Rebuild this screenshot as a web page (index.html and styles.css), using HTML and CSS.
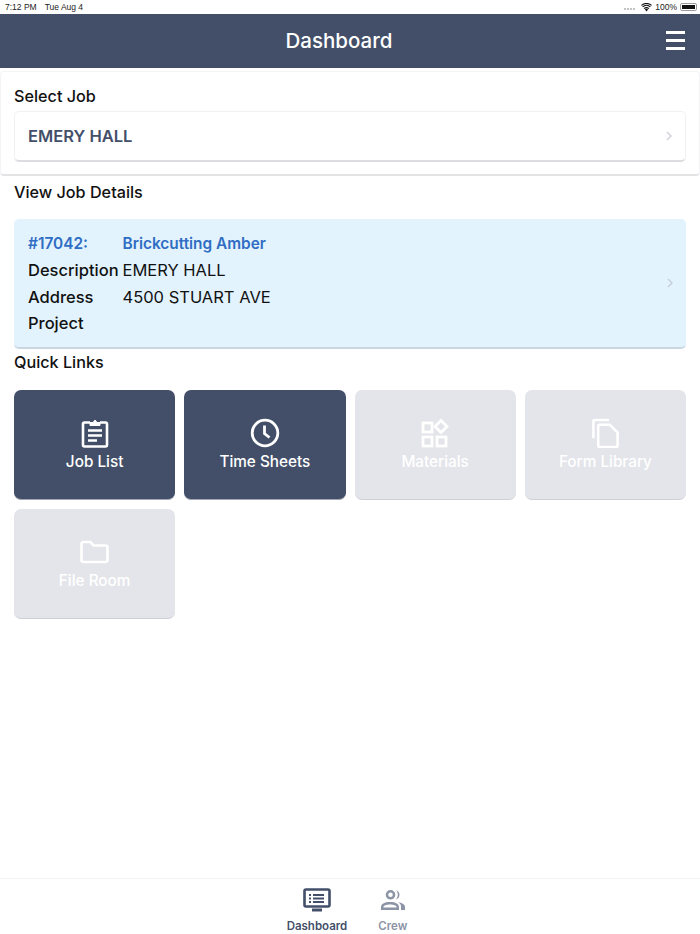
FILE: index.html
```html
<!DOCTYPE html>
<html lang="en">
<head>
    <meta charset="UTF-8">
    <meta name="viewport" content="width=device-width, initial-scale=1.0">
    <title>Dashboard</title>
    <link rel="stylesheet" href="styles.css">
</head>
<body>
    <div class="app">
        <!-- Status bar -->
        <div class="status-bar">
            <div class="status-left"><span>7:12 PM</span><span>Tue Aug 4</span></div>
            <div class="status-right">
                <span class="signal"><i></i><i></i><i></i><i></i></span>
                <svg class="wifi" width="11" height="9" viewBox="0 0 13 10">
                    <path d="M6.500 9.600 4.600 7.400a2.900 2.900 0 0 1 3.800 0z" fill="#111"/>
                    <path d="M3.600 6.300a4.500 4.500 0 0 1 5.800 0" fill="none" stroke="#111" stroke-width="1.400"/>
                    <path d="M1.900 4.300a7 7 0 0 1 9.200 0" fill="none" stroke="#111" stroke-width="1.400"/>
                    <path d="M.5 2.400a9.200 9.200 0 0 1 12 0" fill="none" stroke="#111" stroke-width="1.300"/>
                </svg>
                <span>100%</span>
                <span class="battery"><span class="battery-fill"></span></span>
            </div>
        </div>

        <!-- Nav bar -->
        <header class="nav-bar">
            <h1>Dashboard</h1>
            <div class="menu"><i></i><i></i><i></i></div>
        </header>

        <main class="content">
            <section class="select-card">
                <h2>Select Job</h2>
                <div class="job-select">
                    <span>EMERY HALL</span>
                    <svg class="chevron" width="6" height="10" viewBox="0 0 6 10"><path d="M1 1l4 4-4 4" fill="none" stroke="#cfd1d8" stroke-width="1.400"/></svg>
                </div>
            </section>

            <div class="inner">
                <h2 class="details-title">View Job Details</h2>
                <div class="job-details">
                    <div class="details-grid">
                        <div class="job-no">#17042:</div>
                        <div class="job-name">Brickcutting Amber</div>
                        <div class="key">Description</div>
                        <div>EMERY HALL</div>
                        <div class="key">Address</div>
                        <div>4500 STUART AVE</div>
                        <div class="key">Project</div>
                        <div></div>
                    </div>
                    <svg class="chevron" width="6" height="10" viewBox="0 0 6 10"><path d="M1 1l4 4-4 4" fill="none" stroke="#c5ced8" stroke-width="1.400"/></svg>
                </div>

                <h2 class="links-title">Quick Links</h2>
                <div class="tiles">
                    <a class="tile active">
                        <svg width="28" height="30" viewBox="0 0 28 30" fill="none" stroke="#fff" stroke-width="2.600">
                            <path d="M9 4.500H3.500a1.500 1.500 0 0 0-1.500 1.500v21a1.500 1.500 0 0 0 1.500 1.500h21a1.500 1.500 0 0 0 1.500-1.500V6a1.500 1.500 0 0 0-1.500-1.500H19"/>
                            <path d="M9 4.500h3l2-2.500 2 2.500h3v3H9z" fill="#fff" stroke-width="1"/>
                            <path d="M7 12.500h14M7 17.500h14M7 22.500h9"/>
                        </svg>
                        <span>Job List</span>
                    </a>
                    <a class="tile active">
                        <svg width="30" height="30" viewBox="0 0 30 30" fill="none" stroke="#fff" stroke-width="2.800">
                            <circle cx="15" cy="15" r="12.800"/>
                            <path d="M14.500 7.500v8l5 4"/>
                        </svg>
                        <span>Time Sheets</span>
                    </a>
                    <a class="tile">
                        <svg width="28" height="28" viewBox="0 0 28 28" fill="none" stroke="#fff" stroke-width="2.800">
                            <rect x="2" y="4" width="9" height="9"/>
                            <path d="M20 1.500l6 6-6 6-6-6z"/>
                            <rect x="2" y="18" width="9" height="9"/>
                            <rect x="16" y="18" width="9" height="9"/>
                        </svg>
                        <span>Materials</span>
                    </a>
                    <a class="tile">
                        <svg width="28" height="31" viewBox="0 0 28 31" fill="none" stroke="#fff" stroke-width="2.600">
                            <path d="M2 21V3.500A1.500 1.500 0 0 1 3.500 2H18"/>
                            <path d="M7 8.500A1.500 1.500 0 0 1 8.500 7H19l8 8v13.500a1.500 1.500 0 0 1-1.500 1.500h-17A1.500 1.500 0 0 1 7 28.500z"/>
                        </svg>
                        <span>Form Library</span>
                    </a>
                    <a class="tile">
                        <svg width="29" height="24" viewBox="0 0 29 24" fill="none" stroke="#fff" stroke-width="2.600">
                            <path d="M1.500 4A2 2 0 0 1 3.500 2h7l3 3.500h12a2 2 0 0 1 2 2V20a2 2 0 0 1-2 2h-22a2 2 0 0 1-2-2z"/>
                        </svg>
                        <span>File Room</span>
                    </a>
                </div>
            </div>
        </main>

        <!-- Tab bar -->
        <nav class="tab-bar">
            <a class="tab current">
                <svg width="28" height="24" viewBox="0 0 28 24" fill="none" stroke="#434f69" stroke-width="2.600">
                    <rect x="1.500" y="1.500" width="25" height="17" rx="1.500"/>
                    <path d="M9 22h10" stroke-width="3"/>
                    <path d="M10 7h11M10 10.500h11M10 14h11" stroke-width="1.800"/>
                    <path d="M6 7h2M6 10.500h2M6 14h2" stroke-width="1.800"/>
                </svg>
                <span>Dashboard</span>
            </a>
            <a class="tab">
                <svg width="26" height="24" viewBox="0 0 26 22" fill="#8c94a6" stroke="none">
                    <path fill-rule="evenodd" d="M10.500 1a4.800 4.800 0 1 1 0 9.600 4.800 4.800 0 0 1 0-9.600zm0 2.500a2.300 2.300 0 1 0 0 4.600 2.300 2.300 0 0 0 0-4.600z"/>
                    <path fill-rule="evenodd" d="M1 21v-3c0-3 3.500-5 9-5s9 2 9 5v3zm2.500-2.500h13V18c0-1.200-2.300-2.500-6.500-2.500s-6.500 1.300-6.500 2.500z"/>
                    <path d="M16 1.200a4.800 4.800 0 0 1 0 9.200c1.200-1.300 1.800-2.800 1.800-4.600S17.200 2.500 16 1.200z"/>
                    <path d="M18.500 13.200c4 .6 6.500 2.400 6.500 4.800v3h-4v-3.500c0-1.600-.9-3.100-2.500-4.300z"/>
                </svg>
                <span>Crew</span>
            </a>
        </nav>
    </div>
</body>
</html>
```

FILE: styles.css
```css
* {
    box-sizing: border-box;
}

body {
    margin: 0;
    background: #fff;
    color: #111;
    font-family: Inter, Lato, Arial, sans-serif;
}

.app {
    width: 700px;
    height: 934px;
    display: flex;
    flex-direction: column;
    overflow: hidden;
}

/* Status bar */
.status-bar {
    height: 14px;
    padding: 0 3px 0 5px;
    display: flex;
    justify-content: space-between;
    align-items: center;
    font-family: "Liberation Sans", Arial, sans-serif;
    font-size: 8.500px;
    color: #222;
}

.status-left {
    display: flex;
    gap: 8px;
}

.status-right {
    display: flex;
    align-items: center;
    gap: 3px;
}

.signal {
    display: flex;
    gap: 1px;
    align-items: flex-end;
    height: 6px;
    margin-right: 3px;
}

.signal i {
    width: 2px;
    height: 2px;
    background: #c4c4c4;
}

.battery {
    width: 17px;
    height: 8px;
    padding: 1px;
    border: 1px solid #9a9a9a;
    border-radius: 2px;
    display: block;
}

.battery-fill {
    display: block;
    height: 100%;
    background: #111;
}

/* Nav bar */
.nav-bar {
    height: 54px;
    flex: none;
    background: #434f69;
    display: flex;
    align-items: center;
    justify-content: center;
    position: relative;
    padding: 0 22px 1px 0;
}

.nav-bar h1 {
    margin: 0;
    color: #fff;
    font-size: 20.500px;
    font-weight: 500;
}

.menu {
    position: absolute;
    right: 15px;
    top: 17px;
    width: 19px;
    display: flex;
    flex-direction: column;
    gap: 5px;
}

.menu i {
    height: 3px;
    background: #fff;
}

/* Content */
.content {
    flex: 1;
    padding-top: 3px;
}

h2 {
    margin: 0;
    font-size: 16.200px;
    font-weight: 500;
    line-height: 20px;
    color: #111;
}

.select-card {
    height: 105px;
    padding: 14px 13px 0;
    border: 1px solid #f4f4f6;
    border-bottom: 2px solid #e3e3e6;
    border-radius: 4px;
}

.job-select {
    margin-top: 5px;
    height: 51px;
    padding: 0 13px 0 13px;
    display: flex;
    align-items: center;
    justify-content: space-between;
    border: 1px solid #f1f1f3;
    border-bottom: 2px solid #dcdde0;
    border-radius: 5px;
    color: #434f69;
    font-size: 16.500px;
    font-weight: 600;
}

.inner {
    padding: 0 14px;
}

.details-title {
    margin-top: 6px;
}

.job-details {
    margin-top: 17px;
    height: 130px;
    padding: 14px 13px 0 14px;
    background: #e2f3fd;
    border-bottom: 2px solid #c9d6e2;
    border-radius: 5px;
    display: flex;
    justify-content: space-between;
}

.job-details .chevron {
    margin-top: 45px;
}

.details-grid {
    display: grid;
    grid-template-columns: 94.500px 1fr;
    grid-auto-rows: 27px 27px 26px 26px;
    font-size: 16.500px;
    line-height: 20px;
}

.job-no,
.job-name {
    padding-top: 1px;
    color: #2f6dc4;
    font-weight: 600;
    font-size: 15.400px;
}

.key {
    font-weight: 500;
}

.links-title {
    margin-top: 3px;
}

/* Quick link tiles */
.tiles {
    margin-top: 18px;
    display: grid;
    grid-template-columns: repeat(4, 1fr);
    gap: 9px;
}

.tile {
    height: 110px;
    padding-top: 28px;
    display: flex;
    flex-direction: column;
    align-items: center;
    background: #e4e5ea;
    border-bottom: 1px solid #cfd0d6;
    border-radius: 7px;
    color: #fff;
    font-size: 15.300px;
    font-weight: 500;
}

.tile svg {
    height: 30px;
    margin-bottom: 4px;
}

.tile.active {
    background: #434f69;
    border-bottom-color: #a0a6b4;
}

/* Tab bar */
.tab-bar {
    height: 56px;
    flex: none;
    border-top: 1px solid #f2f2f4;
    display: flex;
    justify-content: center;
    gap: 31px;
    padding: 9px 6px 0 0;
}

.tab {
    display: flex;
    flex-direction: column;
    align-items: center;
    gap: 7px;
    color: #8c94a6;
    font-size: 11.500px;
    font-weight: 600;
}

.tab.current {
    color: #434f69;
}
```
